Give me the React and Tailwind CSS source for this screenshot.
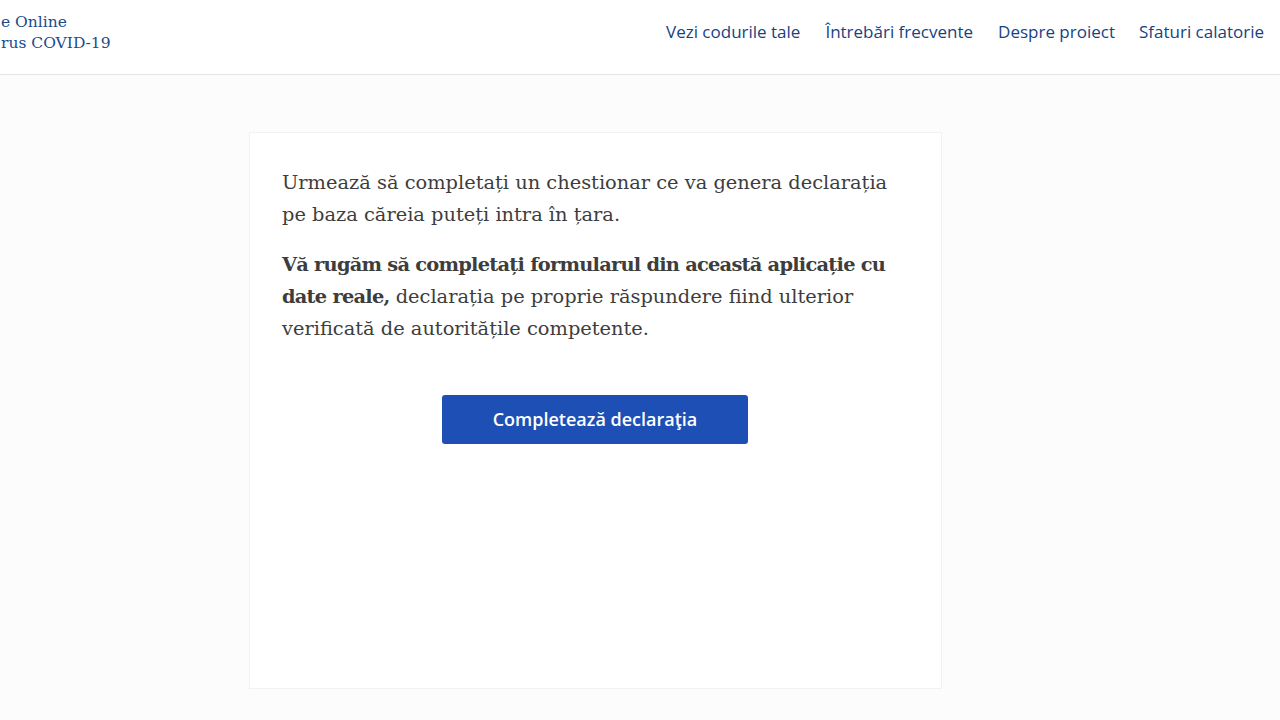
export default function App() {
  const serif = { fontFamily: '"DejaVu Serif", serif' };
  return (
    <div className="min-h-[720px] bg-[#fcfcfc]" style={{ fontFamily: '"Open Sans", sans-serif' }}>
      <header className="h-[75px] bg-white border-b border-[#e6e6e6] flex items-center justify-between pr-4 overflow-hidden">
        <div className="text-[#1b4a8c] text-[15.5px] leading-[21px] -mt-[8px] pl-[1px]" style={serif}>
          <div>e Online</div>
          <div>rus COVID-19</div>
        </div>
        <nav className="flex items-center gap-[24px] text-[17px] text-[#17437f] font-medium -mt-[11px]">
          <a className="mr-[1px]">Vezi codurile tale</a>
          <a className="mr-[1px]">Întrebări frecvente</a>
          <a>Despre proiect</a>
          <a>Sfaturi calatorie</a>
        </nav>
      </header>
      <main className="flex justify-center pt-[57px] pb-[30px]">
        <div className="w-[693px] h-[557px] bg-white border border-[#f2f2f2] pl-[32px] pr-[30px] pt-[34px] ml-[-89px]">
          <div className="text-[#3d3d3d] text-[19.4px] leading-[32px]" style={serif}>
            <p className="mb-[18px]">Urmează să completați un chestionar ce va genera declarația pe baza căreia puteți intra în țara.</p>
            <p>
              <b className="font-bold tracking-[-0.75px]">Vă rugăm să completați formularul din această aplicație cu date reale,</b>{" "}declarația pe proprie răspundere fiind ulterior verificată de autoritățile competente.
            </p>
          </div>
          <div className="flex justify-center pr-[3px] mt-[50px]">
            <button className="w-[306px] h-[49px] rounded-[3px] bg-[#1e4fb4] text-white text-[18px] font-semibold">
              Completează declaraţia
            </button>
          </div>
        </div>
      </main>
    </div>
  );
}
